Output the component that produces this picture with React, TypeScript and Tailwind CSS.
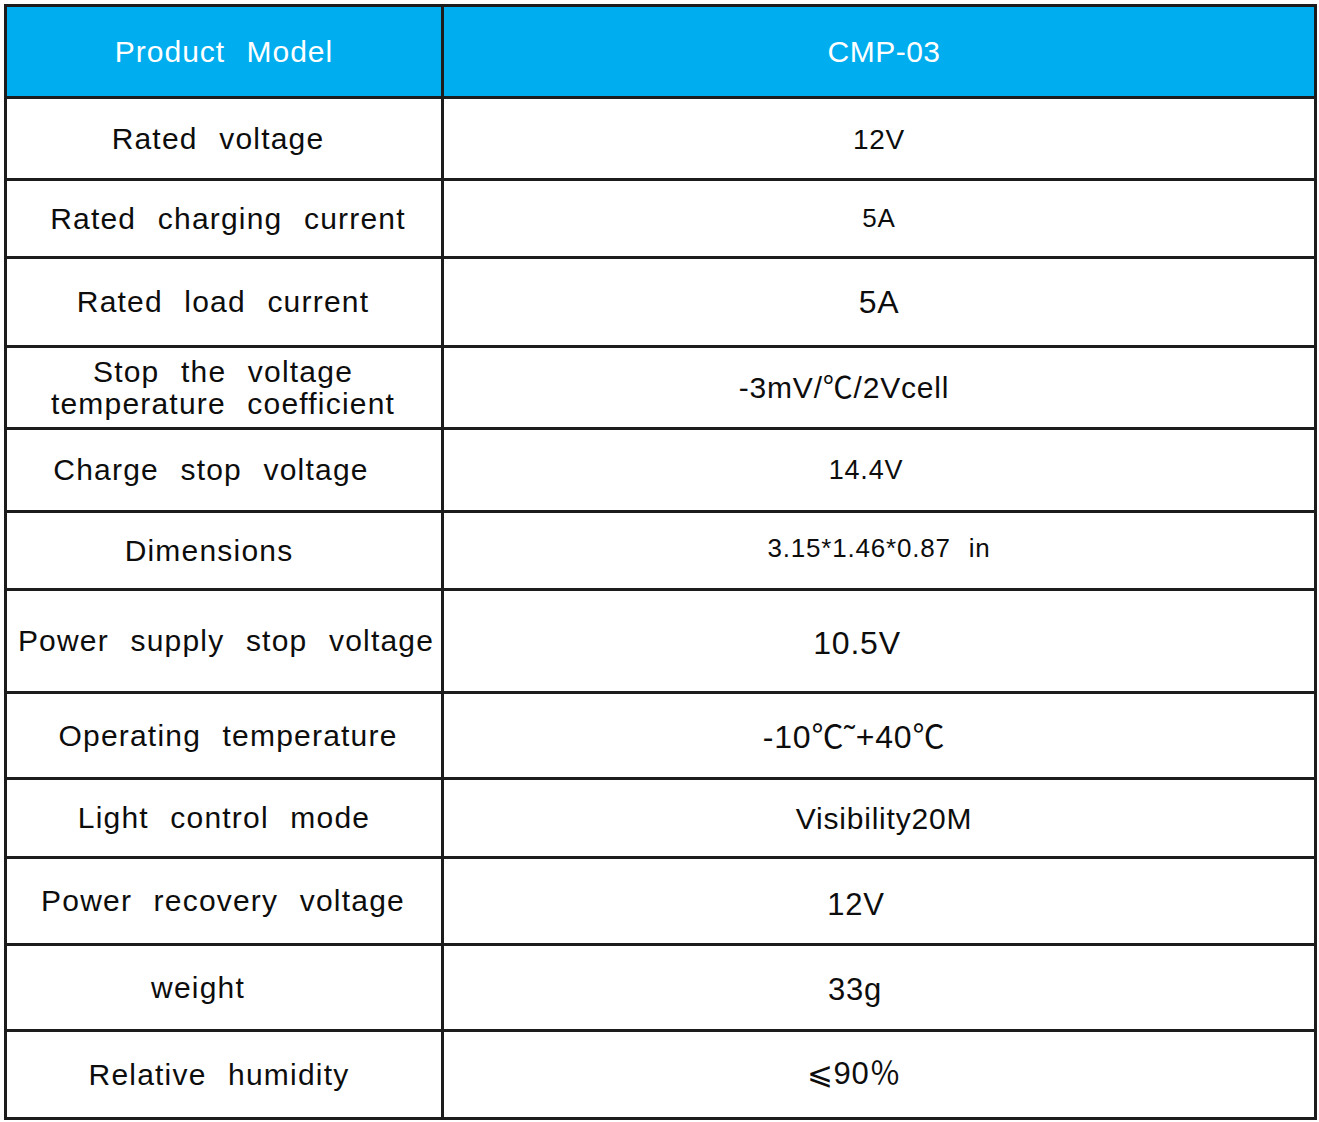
type SpecRow = {
  label: string[];
  value: string;
  h: string;
  labelShift: string;
  valueClass: string;
};

const rows: SpecRow[] = [
  { label: ["Rated voltage"], value: "12V", h: "h-[79px]", labelShift: "pr-[12px]", valueClass: "text-[28px] pt-[2px]" },
  { label: ["Rated charging current"], value: "5A", h: "h-[75px]", labelShift: "pl-[8px]", valueClass: "text-[26px]" },
  { label: ["Rated load current"], value: "5A", h: "h-[86px]", labelShift: "pr-[2px]", valueClass: "text-[32px]" },
  {
    label: ["Stop the voltage", "temperature coefficient"],
    value: "-3mV/℃/2Vcell",
    h: "h-[79px]",
    labelShift: "pr-[2px]",
    valueClass: "text-[30px] pr-[70px]",
  },
  { label: ["Charge stop voltage"], value: "14.4V", h: "h-[80px]", labelShift: "pr-[26px]", valueClass: "text-[27px] pr-[26px]" },
  { label: ["Dimensions"], value: "3.15*1.46*0.87 in", h: "h-[75px]", labelShift: "pr-[30px]", valueClass: "text-[26px] pb-[4px]" },
  { label: ["Power supply stop voltage"], value: "10.5V", h: "h-[100px]", labelShift: "pl-[4px]", valueClass: "text-[32px] pr-[44px] pt-[4px]" },
  { label: ["Operating temperature"], value: "-10℃˜+40℃", h: "h-[83px]", labelShift: "pl-[8px]", valueClass: "text-[32px] pr-[50px] pt-[2px]" },
  { label: ["Light control mode"], value: "Visibility20M", h: "h-[76px]", labelShift: "pr-[0px]", valueClass: "text-[30px] pl-[10px]" },
  { label: ["Power recovery voltage"], value: "12V", h: "h-[84px]", labelShift: "pr-[2px]", valueClass: "text-[31px] pr-[46px] pt-[8px]" },
  { label: ["weight"], value: "33g", h: "h-[83px]", labelShift: "pr-[52px]", valueClass: "text-[31px] pr-[48px] pt-[6px]" },
  { label: ["Relative humidity"], value: "⩽90％", h: "h-[85px]", labelShift: "pr-[10px]", valueClass: "text-[31px] pr-[50px]" },
];

export default function App() {
  return (
    <div className="min-h-screen bg-white pt-[4px] font-['Liberation_Sans','Noto_Sans_CJK_SC',sans-serif] text-[#0d0d0d]">
      <div className="ml-[4px] w-[1313px] border-[3px] border-b-0 border-[#1c1c1c]">
        <div className="flex h-[92px] border-b-[3px] border-[#1c1c1c] bg-[#00aeef] text-white">
          <div className="flex w-[437px] items-center justify-center border-r-[3px] border-[#1c1c1c] text-[30px] tracking-[1px] [word-spacing:12px]">
            Product Model
          </div>
          <div className="flex flex-1 items-center justify-center pl-[10px] text-[30px] tracking-[0.5px]">
            CMP-03
          </div>
        </div>
        {rows.map((r) => (
          <div key={r.label.join(" ")} className={`box-content flex border-b-[3px] border-[#1c1c1c] ${r.h}`}>
            <div
              className={`flex w-[437px] flex-col items-center justify-center border-r-[3px] border-[#1c1c1c] text-center text-[30px] leading-[32px] tracking-[1.2px] [word-spacing:12px] ${r.labelShift}`}
            >
              {r.label.map((line) => (
                <span key={line} className="whitespace-nowrap">
                  {line}
                </span>
              ))}
            </div>
            <div
              className={`flex flex-1 items-center justify-center whitespace-nowrap tracking-[0.8px] [word-spacing:10px] ${r.valueClass}`}
            >
              {r.value}
            </div>
          </div>
        ))}
      </div>
    </div>
  );
}
